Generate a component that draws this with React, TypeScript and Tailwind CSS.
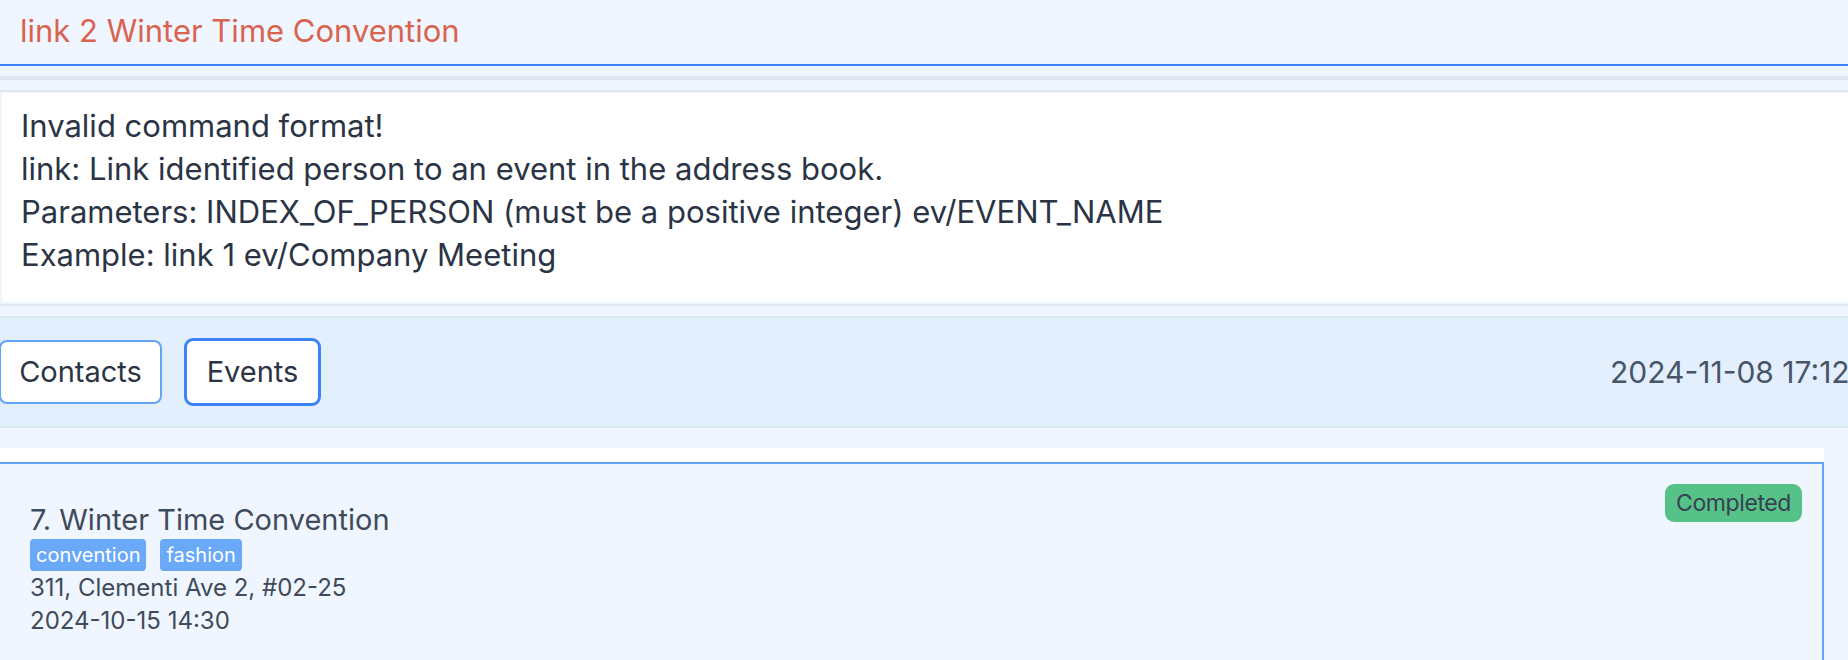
export default function App() {
    return (
        <div className="w-[1848px] h-[660px] overflow-hidden bg-[#eff6ff] flex flex-col font-['Inter',sans-serif]">
            {/* command box */}
            <div className="h-[66px] shrink-0 border-b-2 border-[#3b82f6] pl-[20px] pt-[13px] text-[31px] leading-[36px] text-[#d9634f] whitespace-nowrap">
                link 2 Winter Time Convention
            </div>

            <div className="h-[10px] shrink-0" />
            <div className="h-[4px] shrink-0 bg-[#dfe7f0]" />
            <div className="h-[10px] shrink-0" />
            <div className="h-[2px] shrink-0 bg-[#dfe7f0]" />
            <div className="h-[1px] shrink-0" />

            {/* result box */}
            <div className="h-[209px] shrink-0 ml-[2px] bg-white pt-[11px] pl-[19px] text-[31px] leading-[43px] text-[#2b3445] whitespace-nowrap">
                <p>Invalid command format!</p>
                <p>link: Link identified person to an event in the address book.</p>
                <p>Parameters: INDEX_OF_PERSON (must be a positive integer) ev/EVENT_NAME</p>
                <p>Example: link 1 ev/Company Meeting</p>
            </div>

            <div className="h-[2px] shrink-0" />
            <div className="h-[2px] shrink-0 bg-[#dfe7f0]" />
            <div className="h-[10px] shrink-0" />
            <div className="h-[2px] shrink-0 bg-[#dfe7f0]" />

            {/* tab bar */}
            <div className="h-[108px] shrink-0 bg-[#e3effd] flex items-center whitespace-nowrap">
                <button className="-ml-[1px] shrink-0 w-[163px] h-[64px] rounded-[8px] border-2 border-[#60a5fa] bg-white text-[29px] text-[#2b3445]">
                    Contacts
                </button>
                <button className="ml-[22px] shrink-0 w-[137px] h-[68px] rounded-[9px] border-[3px] border-[#3b82f6] bg-white text-[29px] text-[#2b3445]">
                    Events
                </button>
                <span className="ml-[1289px] shrink-0 text-[30px] text-[#475569]">2024-11-08 17:12</span>
            </div>

            <div className="h-[2px] shrink-0 bg-[#dfe7f0]" />
            <div className="h-[20px] shrink-0" />

            {/* event list */}
            <div className="flex-1 w-[1824px] bg-white pt-[14px]">
                <div className="h-full border-t-2 border-r-2 border-[#60a5fa] bg-[#eff6ff] pt-[20px] pl-[30px] pr-[20px] flex justify-between items-start text-[#3f4a5a]">
                    <div className="mt-[18px] flex flex-col">
                        <h3 className="text-[29px] leading-[36px]">7. Winter Time Convention</h3>
                        <div className="flex gap-[14px] mt-[1px]">
                            <span className="h-[32px] px-[6px] rounded-[4px] bg-[#6aa8f8] text-white text-[20px] leading-[32px]">convention</span>
                            <span className="h-[32px] px-[6px] rounded-[4px] bg-[#6aa8f8] text-white text-[20px] leading-[32px]">fashion</span>
                        </div>
                        <p className="text-[24px] leading-[33px]">311, Clementi Ave 2, #02-25</p>
                        <p className="text-[24px] leading-[33px]">2024-10-15 14:30</p>
                    </div>
                    <span className="h-[38px] px-[11px] rounded-[9px] bg-[#57c288] text-[#374151] text-[23px] tracking-[-0.4px] leading-[38px]">
                        Completed
                    </span>
                </div>
            </div>
        </div>
    );
}
